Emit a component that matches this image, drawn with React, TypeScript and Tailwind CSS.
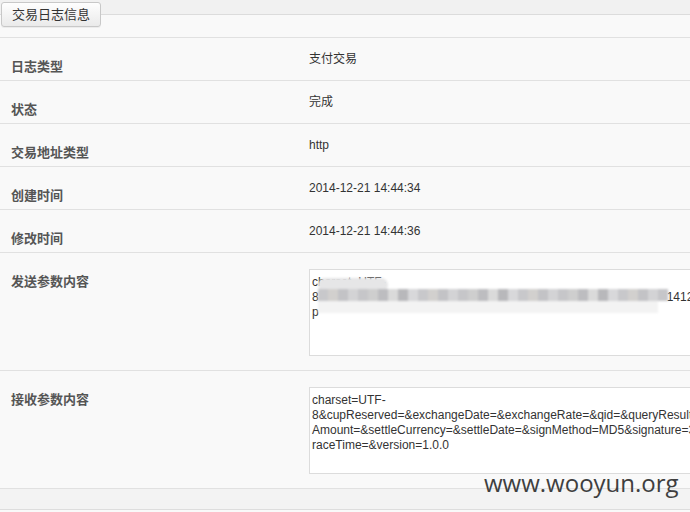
import type { ReactNode } from 'react';

const font = { fontFamily: '"Liberation Sans", Arial, "Noto Sans CJK SC", sans-serif' };

const rows = [
  { label: '日志类型', value: '支付交易' },
  { label: '状态', value: '完成' },
  { label: '交易地址类型', value: 'http' },
  { label: '创建时间', value: '2014-12-21 14:44:34' },
  { label: '修改时间', value: '2014-12-21 14:44:36' },
];

const received = [
  'charset=UTF-',
  '8&cupReserved=&exchangeDate=&exchangeRate=&qid=&queryResult=&respCode=00&respMsg=&settle',
  'Amount=&settleCurrency=&settleDate=&signMethod=MD5&signature=3f0a1c8e2b7d&traceNumber=&t',
  'raceTime=&version=1.0.0',
];

// pixelated shades for the censored part
const dark = ['#c8c8cb', '#d3d3d5', '#bdbdc0', '#d8d8da', '#c3c3c6', '#cecece', '#b8b8bb', '#d2d0ce', '#c6c6c9', '#dadada'];
const light = ['#ececec', '#f0f0f0', '#e6e6e7', '#f3f3f3', '#e9e9ea', '#eeeeee', '#e3e3e4'];

function Mosaic({ cols, palette, seed }: { cols: number; palette: string[]; seed: number }) {
  return (
    <div className="flex">
      {Array.from({ length: cols }).map((_, i) => (
        <div
          key={i}
          className="h-[12px] w-[10px]"
          style={{ backgroundColor: palette[(i * 7 + seed) % palette.length] }}
        />
      ))}
    </div>
  );
}

function Row({ label, children, tall }: { label: string; children: ReactNode; tall?: boolean }) {
  return (
    <div className={`flex border-b border-[#e1e1e1] ${tall ? 'h-[118px]' : 'h-[43px]'}`}>
      <div className="w-[309px] shrink-0 pl-[11px] pt-[21px] text-[13px] font-bold leading-[15px] text-[#555]">
        {label}
      </div>
      <div className={`min-w-0 flex-1 ${tall ? 'pt-[16px]' : 'pt-[14px]'} text-[12px] leading-[15px] text-[#333]`}>
        {children}
      </div>
    </div>
  );
}

function Box({ children }: { children: ReactNode }) {
  return (
    <div className="relative h-[87px] w-[420px] overflow-hidden border border-[#dcdcdc] bg-white pl-[2px] pt-[5px] text-[12px] leading-[15px] text-[#333]">
      {children}
    </div>
  );
}

function SentBox() {
  return (
    <Box>
      <div className="whitespace-pre">charset=UTF-</div>
      <div className="flex whitespace-pre">
        <span>8</span>
        <span className="w-[348px] shrink-0" />
        <span>1412</span>
      </div>
      <div className="whitespace-pre">p</div>
      <div className="absolute left-[7px] top-[8px] blur-[1.2px]">
        <div className="ml-[1px] h-[14px] w-[70px] rounded-[7px] bg-[#e6e6e7]" />
        <div className="-mt-[3px] ml-[1px]">
          <Mosaic cols={35} palette={dark} seed={0} />
        </div>
        <div className="ml-[1px]">
          <Mosaic cols={34} palette={light} seed={3} />
        </div>
      </div>
    </Box>
  );
}

export default function App() {
  return (
    <div className="relative h-[512px] w-[690px] overflow-hidden bg-[#f9f9f9]" style={font}>
      <div className="relative h-[38px] border-b border-[#e1e1e1]">
        <div className="h-[15px] border-b border-[#dcdcdc] bg-[#f1f1f1]" />
        <button className="absolute left-[1px] top-[2px] h-[25px] w-[100px] rounded-[3px] border border-[#c8c8c8] bg-gradient-to-b from-[#fefefe] to-[#eaeaea] text-[13px] text-[#333] shadow-[0_1px_0_rgba(0,0,0,0.05)]">
          交易日志信息
        </button>
      </div>
      {rows.map((r) => (
        <Row key={r.label} label={r.label}>
          {r.value}
        </Row>
      ))}
      <Row label="发送参数内容" tall>
        <SentBox />
      </Row>
      <Row label="接收参数内容" tall>
        <Box>
          {received.map((l, i) => (
            <div key={i} className="whitespace-pre">
              {l}
            </div>
          ))}
        </Box>
      </Row>
      <div className="h-[21px] border-b border-[#dddddd] bg-[#f3f3f3]" />
      <div
        className="absolute left-[484px] top-[467px] text-[24px] leading-[32px] text-[#3f3f3f]"
        style={{ fontFamily: '"Open Sans", "DejaVu Sans", sans-serif' }}
      >
        www.wooyun.org
      </div>
    </div>
  );
}
